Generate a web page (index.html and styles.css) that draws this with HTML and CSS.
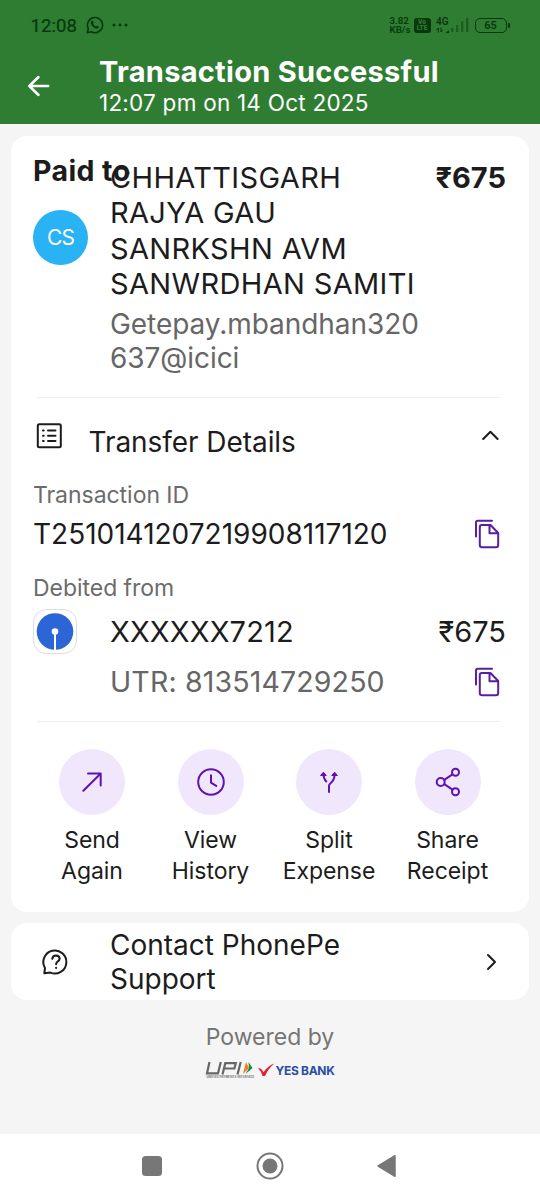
FILE: index.html
```
<!DOCTYPE html>
<html lang="en">
<head>
<meta charset="utf-8">
<title>Transaction Successful</title>
<link rel="stylesheet" href="styles.css">
</head>
<body>
<header class="header">
  <div class="status">
    <span class="clock">12:08</span>
    <svg class="wa" width="18" height="18" viewBox="0 0 18 18" fill="none"><path d="M1.200 16.800l1.200-4A7.600 7.600 0 1 1 5.300 15.700z" stroke="currentColor" stroke-width="1.600" stroke-linejoin="round"/><path d="M5.300 5.200c.5-.8 1.500-.8 1.800 0l.6 1.500-.6 1c.6 1.300 1.600 2.200 2.900 2.800l1-.8 1.800.9c.2 1.500-1.200 2.400-2.600 2.100-2.700-.6-5.400-3.400-5.500-6.100 0-.5.200-1 .6-1.400z" fill="currentColor"/></svg>
    <svg class="dots" width="16" height="4" viewBox="0 0 16 4" fill="currentColor"><circle cx="2" cy="2" r="1.500"/><circle cx="8" cy="2" r="1.500"/><circle cx="14" cy="2" r="1.500"/></svg>
    <div class="rate"><span>3.82</span><span>KB/s</span></div>
    <div class="volte"><span>Vo</span><span>LTE</span></div>
    <div class="net"><span>4G</span><svg width="14" height="6" viewBox="0 0 14 6" fill="none" stroke="currentColor"><path d="M2.300 5.500V1M.6 3L2.300 1M5 .5V5M5 5l1.700-2" stroke-width="1"/><path d="M9.500 6H13V3z" fill="currentColor" stroke="none"/></svg></div>
    <svg class="bars" width="18" height="16" viewBox="0 0 18 16" fill="currentColor"><path d="M0 11h2.400v4H0zM5 8h2.400v7H5zM10 4.500h2.400V15H10zM15 1h2.400v14H15z"/></svg>
    <div class="battery">65</div><i class="tip"></i>
  </div>
  <div class="appbar">
    <svg class="back" width="24" height="24" viewBox="0 0 24 24" fill="none" stroke="currentColor" stroke-width="2.500" stroke-linecap="round" stroke-linejoin="round"><path d="M21.200 12H2.500M11.500 3L2.300 12l9.200 9"/></svg>
    <div><h1 class="title">Transaction Successful</h1><p class="subtitle">12:07 pm on 14 Oct 2025</p></div>
  </div>
</header>
<main class="main">
  <section class="card">
    <div class="payee">
      <h2 class="paid">Paid to</h2>
      <div class="avatar">CS</div>
      <div class="who">
        <p class="name">CHHATTISGARH<br>RAJYA GAU<br>SANRKSHN AVM<br>SANWRDHAN SAMITI</p>
        <p class="vpa">Getepay.mbandhan320<br>637@icici</p>
      </div>
      <div class="amount bold">₹675</div>
    </div>
    <hr class="rule">
    <div class="details-head">
      <svg class="list" width="26" height="26" viewBox="0 0 26 26" fill="none" stroke="currentColor" stroke-width="2" stroke-linecap="round"><rect x="1.800" y="1.300" width="23" height="23" rx="1.500"/><path d="M12 7.600h7.500M12 12.800h7.500M12 18h7.500"/><path d="M7 7.600h.7M7 12.800h.7M7 18h.7"/></svg>
      <h3 class="h3">Transfer Details</h3>
      <svg class="chev-up" width="18" height="12" viewBox="0 0 18 12" fill="none" stroke="currentColor" stroke-width="2" stroke-linecap="round" stroke-linejoin="round"><path d="M2.200 10l7.200-7.300 7.200 7.300"/></svg>
    </div>
    <div class="label l1">Transaction ID</div>
    <div class="row r1"><span class="value">T2510141207219908117120</span>
      <svg class="copy" width="26" height="30" viewBox="0 0 26 30" fill="none" stroke="currentColor" stroke-width="2" stroke-linecap="round" stroke-linejoin="round"><path d="M2 17.500V3.500Q2 1.800 3.700 1.800H18"/><path d="M7.700 6h8.800l7.700 8v12q0 2.200-2.200 2.200H8q-2.200 0-2.200-2.200V8q0-2 1.900-2zM15.500 6.500v7.800h8"/></svg></div>
    <div class="label l2">Debited from</div>
    <div class="row r2">
      <svg class="bank" width="44" height="45" viewBox="0 0 44 45"><rect x=".5" y=".5" width="43" height="44" rx="13" fill="#fff" stroke="#dedcdd"/><circle cx="22" cy="22.500" r="18.300" fill="#2c66d6"/><path d="M21 22h2v19h-2z" fill="#fff"/><circle cx="22" cy="22.500" r="3.300" fill="#fff"/></svg>
      <span class="value acct">XXXXXX7212</span><span class="amount">₹675</span></div>
    <div class="row r3"><span class="utr">UTR: 813514729250</span>
      <svg class="copy" width="26" height="30" viewBox="0 0 26 30" fill="none" stroke="currentColor" stroke-width="2" stroke-linecap="round" stroke-linejoin="round"><path d="M2 17.500V3.500Q2 1.800 3.700 1.800H18"/><path d="M7.700 6h8.800l7.700 8v12q0 2.200-2.200 2.200H8q-2.200 0-2.200-2.200V8q0-2 1.900-2zM15.500 6.500v7.800h8"/></svg></div>
    <hr class="rule">
    <div class="actions">
      <div class="action"><div class="disc"><svg width="66" height="66" viewBox="0 0 66 66"><path d="M24.300 41.800L41.500 24.700M29 24.500h12.700v12"/></svg></div>Send<br>Again</div>
      <div class="action"><div class="disc"><svg width="66" height="66" viewBox="0 0 66 66"><circle cx="33" cy="33" r="12.800"/><path d="M33 26.300v7.400l5.200 3.200"/></svg></div>View<br>History</div>
      <div class="action"><div class="disc"><svg width="66" height="66" viewBox="0 0 66 66"><path d="M33 43v-6q0-1.500 1.300-2.500 4.300-3.500 4.300-9M30.300 32.500q-2.800-3-2.900-7.500"/><path class="solid" d="M24.800 26.200l2.600-3 2.600 3zM36 26.200l2.600-3 2.600 3z"/></svg></div>Split<br>Expense</div>
      <div class="action"><div class="disc"><svg width="66" height="66" viewBox="0 0 66 66"><circle cx="25.700" cy="33" r="4"/><circle cx="40.500" cy="23.300" r="3.500"/><circle cx="40.500" cy="42.700" r="3.500"/><path d="M29.300 30.800l8.200-5.500M29.300 35.200l8.200 5.500"/></svg></div>Share<br>Receipt</div>
    </div>
  </section>
  <section class="card support">
    <svg class="help" width="28" height="28" viewBox="0 0 28 28" fill="none" stroke="currentColor" stroke-width="2" stroke-linecap="round" stroke-linejoin="round"><path d="M2.300 25.300L3 20A11.500 11.500 0 1 1 8.300 24.600z"/><path d="M10.300 10.800q.4-3.300 3.700-3.300 3.600.2 3.600 3.300 0 1.700-2 2.900-1.500 1-1.500 2.500M14.100 19.800v.2"/></svg>
    <p class="support-text">Contact PhonePe<br>Support</p>
    <svg class="chev" width="12" height="18" viewBox="0 0 12 18" fill="none" stroke="currentColor" stroke-width="2" stroke-linecap="round" stroke-linejoin="round"><path d="M2 2l7 7-7 7"/></svg>
  </section>
  <footer class="powered">
    <p class="by">Powered by</p>
    <div class="logos">
      <div class="upi"><svg width="49" height="14" viewBox="0 0 49 14" fill="none"><path d="M4.500 1L2 12.300h11L15.800 1M17.500 13.500l2.800-11.300h10.500l-1.400 5.300H20M32.500 13.500L35.700 1" stroke="#666" stroke-width="2.200"/><path d="M41 1l3 6-6 6z" fill="#f47b20"/><path d="M43.500 1l4 6-7 6 3.500-6z" fill="#148a42"/></svg><span>UNIFIED PAYMENTS INTERFACE</span></div>
      <svg class="tick" width="17" height="14" viewBox="0 0 17 14"><path d="M0 5.300q3.200-.9 5.500 4Q10 2.500 16.500.5 10.500 5 7 13H4.500Q3 8 0 5.300z" fill="#e51e3c"/></svg>
      <span class="yes">YES BANK</span>
    </div>
  </footer>
</main>
<nav class="nav">
  <svg width="20" height="20" viewBox="0 0 20 20"><rect width="20" height="20" rx="3.500" fill="#777"/></svg>
  <svg width="28" height="28" viewBox="0 0 28 28"><circle cx="14" cy="14" r="12.500" fill="none" stroke="#777" stroke-width="2"/><circle cx="14" cy="14" r="7.500" fill="#777"/></svg>
  <svg class="nav-back" width="20" height="24" viewBox="0 0 20 24"><path d="M1.200 12L18 1.700v20.600z" fill="#777" stroke="#777" stroke-width="1.500" stroke-linejoin="round"/></svg>
</nav>
</body>
</html>
```
FILE: styles.css
```
* { box-sizing: border-box; }
body { margin: 0; width: 540px; height: 1200px; display: flex; flex-direction: column; background: #f5f5f5; color: #1c1c1c; font-family: Inter, "Noto Sans", sans-serif; overflow: hidden; }
h1, h2, h3, p { margin: 0; font-weight: 400; }
svg { display: block; flex: none; }

.header { height: 124px; flex: none; background: #2f7d32; color: #fff; }
.status { display: flex; align-items: center; height: 50px; padding-left: 30.500px; color: #06380c; font-family: Roboto, sans-serif; white-space: nowrap; }
.clock { width: 55.500px; font-size: 18.500px; font-weight: 400; letter-spacing: .1px; padding-top: 1px; -webkit-text-stroke: .2px; }
.dots { margin-left: 8px; }
.rate { display: flex; flex-direction: column; width: 24px; margin-left: 261.500px; font-size: 9.700px; line-height: 9.500px; font-weight: 600; }
.volte { display: flex; flex-direction: column; align-items: center; width: 17px; height: 15px; padding-top: 1px; border-radius: 3px; background: #06380c; color: #2f7d32; font-size: 6.500px; line-height: 6.500px; font-weight: 900; }
.net { display: flex; flex-direction: column; width: 20px; padding-left: 5.500px; font-size: 10px; line-height: 10px; font-weight: 600; }
.bars { opacity: .45; }
.battery { width: 32px; height: 15px; margin-left: 6px; border: 1.500px solid; border-radius: 5px; font-size: 11px; line-height: 13px; font-weight: 600; text-align: center; }
.tip { width: 2px; height: 5px; margin-left: 1px; background: #06380c; border-radius: 1px; }
.appbar { display: flex; padding: 5.500px 0 0 27px; }
.back { margin: 18px 48px 0 0; }
.title { font-size: 29px; line-height: 32px; font-weight: 700; letter-spacing: .28px; }
.subtitle { margin-top: -.5px; font-size: 22.500px; line-height: 32px; letter-spacing: .24px; }

.main { flex: 1; padding: 12px 11px 0; }
.card { background: #fff; border-radius: 16px; height: 776px; padding: 23.500px 23px 0 22px; }
.payee { position: relative; display: flex; height: 237px; }
.paid { position: absolute; left: 0; top: -5px; font-size: 28.500px; line-height: 32px; font-weight: 700; letter-spacing: .4px; }
.avatar { width: 55px; height: 55px; margin: 50.500px 22px 0 0; border-radius: 50%; background: #29b3f5; color: #fff; font-size: 21px; line-height: 55px; letter-spacing: -.8px; text-align: center; }
.who { flex: 1; }
.name { font-size: 29px; line-height: 35.500px; letter-spacing: .35px; }
.vpa { margin-top: 5.500px; font-size: 28px; line-height: 34px; letter-spacing: -.06px; color: #666; }
.amount { margin-left: auto; font-size: 29px; line-height: 36px; }
.bold { font-weight: 700; }
.rule { height: 1px; margin: 0 6px 0 4px; border: 0; background: #eee; }
.details-head { display: flex; height: 82px; padding: 25px 7px 0 3px; }
.h3 { margin: 1px 0 0 26.500px; font-size: 28px; line-height: 36px; letter-spacing: -.06px; }
.chev-up { margin: 6px 0 0 auto; }
.label { font-size: 23px; line-height: 30px; height: 30px; letter-spacing: -.04px; color: #6b6b6b; }
.row { display: flex; align-items: center; height: 46px; white-space: nowrap; }
.value { font-size: 28px; }
.copy { margin: 0 6px 0 auto; color: #5a1ea6; }
.r1 { margin-top: 1px; }
.l2 { margin-top: 16px; }
.r2 { margin-top: 6px; }
.acct { margin-left: 33px; font-size: 29px; letter-spacing: .15px; }
.utr { margin-left: 77px; font-size: 28.500px; letter-spacing: .15px; color: #666; }
.r3 { margin-top: 4px; margin-bottom: 16px; }
.actions { display: grid; grid-template-columns: repeat(4, 118.500px); justify-content: center; margin-left: .5px; padding-top: 27px; }
.action { font-size: 23px; line-height: 31px; letter-spacing: -.05px; text-align: center; }
.disc { width: 66px; height: 66px; margin: 0 auto 10.500px; border-radius: 50%; background: #f1e7fc; }
.disc svg { fill: none; stroke: #5f12b4; stroke-width: 2; stroke-linejoin: round; stroke-linecap: round; }
.disc .solid { fill: #5f12b4; stroke-width: 1; }
.support { display: flex; align-items: center; height: 77px; margin-top: 11px; padding: 0 31.500px 0 31px; }
.support-text { margin-left: 40px; font-size: 28px; line-height: 34px; }
.chev { margin-left: auto; }
.powered { display: flex; flex-direction: column; align-items: center; padding-top: 22px; }
.by { font-size: 23px; line-height: 30px; color: #757575; }
.logos { display: flex; align-items: center; height: 20px; margin-top: 8px; }
.upi { width: 49px; height: 20px; padding-top: 1px; }
.upi span { display: block; width: 48px; padding-left: 1px; font-size: 3.100px; line-height: 4px; font-weight: 600; color: #666; white-space: nowrap; }
.tick { margin-left: 4px; }
.yes { color: #2a4fa5; font-size: 12px; font-weight: 700; letter-spacing: -.3px; }
.nav { display: grid; grid-template-columns: repeat(3, 118px); justify-content: center; justify-items: center; align-items: center; height: 66px; padding-bottom: 3px; background: #fff; }
.nav-back { margin-right: 3px; }
```
